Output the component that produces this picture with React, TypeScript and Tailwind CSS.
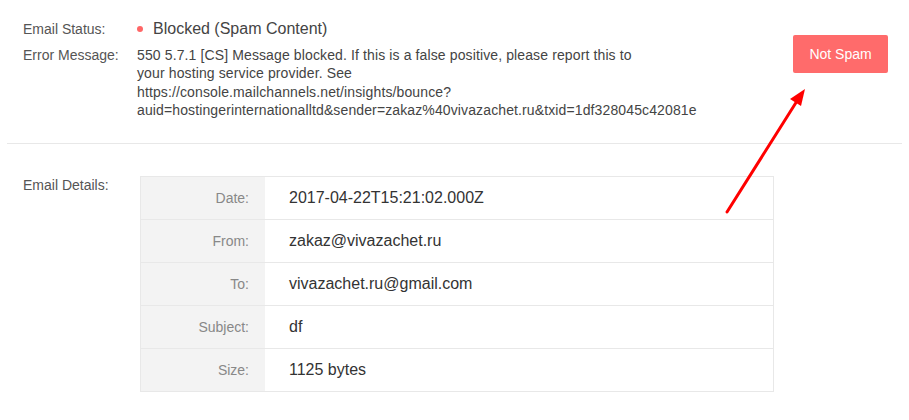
import React from "react";

const rows = [
  { label: "Date:", value: "2017-04-22T15:21:02.000Z" },
  { label: "From:", value: "zakaz@vivazachet.ru" },
  { label: "To:", value: "vivazachet.ru@gmail.com" },
  { label: "Subject:", value: "df" },
  { label: "Size:", value: "1125 bytes" },
];

export default function App() {
  return (
    <div className="relative w-[909px] h-[420px] bg-white px-[7px] font-['Liberation_Sans',Arial,sans-serif] text-[#555]">
      {/* status + error */}
      <div className="flex items-start pl-[16px] pr-[14px] pt-[19px] pb-[24px] border-b border-[#e8e8e8]">
        <div className="flex-1">
          <div className="flex items-center h-[20px]">
            <span className="w-[114px] text-[14px]">Email Status:</span>
            <span className="w-[6px] h-[6px] rounded-full bg-[#f66] mr-[10px]"></span>
            <span className="text-[16px] text-[#444]">Blocked (Spam Content)</span>
          </div>
          <div className="flex mt-[7px]">
            <span className="w-[114px] shrink-0 text-[14px] leading-[18.3px]">Error Message:</span>
            <p className="text-[14px] leading-[18.3px] tracking-[0.12px] text-[#444]">
              550 5.7.1 [CS] Message blocked. If this is a false positive, please report this to
              <br />
              your hosting service provider. See
              <br />
              https://console.mailchannels.net/insights/bounce?
              <br />
              auid=hostingerinternationalltd&amp;sender=zakaz%40vivazachet.ru&amp;txid=1df328045c42081e
            </p>
          </div>
        </div>
        <button className="mt-[16px] w-[95px] h-[38px] rounded-[2px] bg-[#ff6b6b] text-white text-[14px]">
          Not Spam
        </button>
      </div>

      {/* details */}
      <div className="flex pl-[16px] pt-[32px]">
        <span className="w-[117px] shrink-0 text-[14px] leading-[18px]">Email Details:</span>
        <div className="w-[634px] border border-[#e8e8e8]">
          {rows.map((r, i) => (
            <div key={r.label} className={`flex ${i > 0 ? "h-[43px] border-t border-[#e8e8e8]" : "h-[42px]"}`}>
              <div className="w-[124px] shrink-0 bg-[#f3f3f3] flex items-center justify-end pr-[16px] text-[14px] text-[#888]">
                {r.label}
              </div>
              <div className="flex items-center pl-[24px] text-[16px] text-[#333]">{r.value}</div>
            </div>
          ))}
        </div>
      </div>

      {/* annotation arrow */}
      <svg className="absolute left-0 top-0 pointer-events-none" width="909" height="420">
        <line x1="727" y1="212" x2="797" y2="101" stroke="#ff0000" strokeWidth="3" strokeLinecap="round" />
        <polygon points="805,89 790,99 801,106" fill="#ff0000" />
      </svg>
    </div>
  );
}
